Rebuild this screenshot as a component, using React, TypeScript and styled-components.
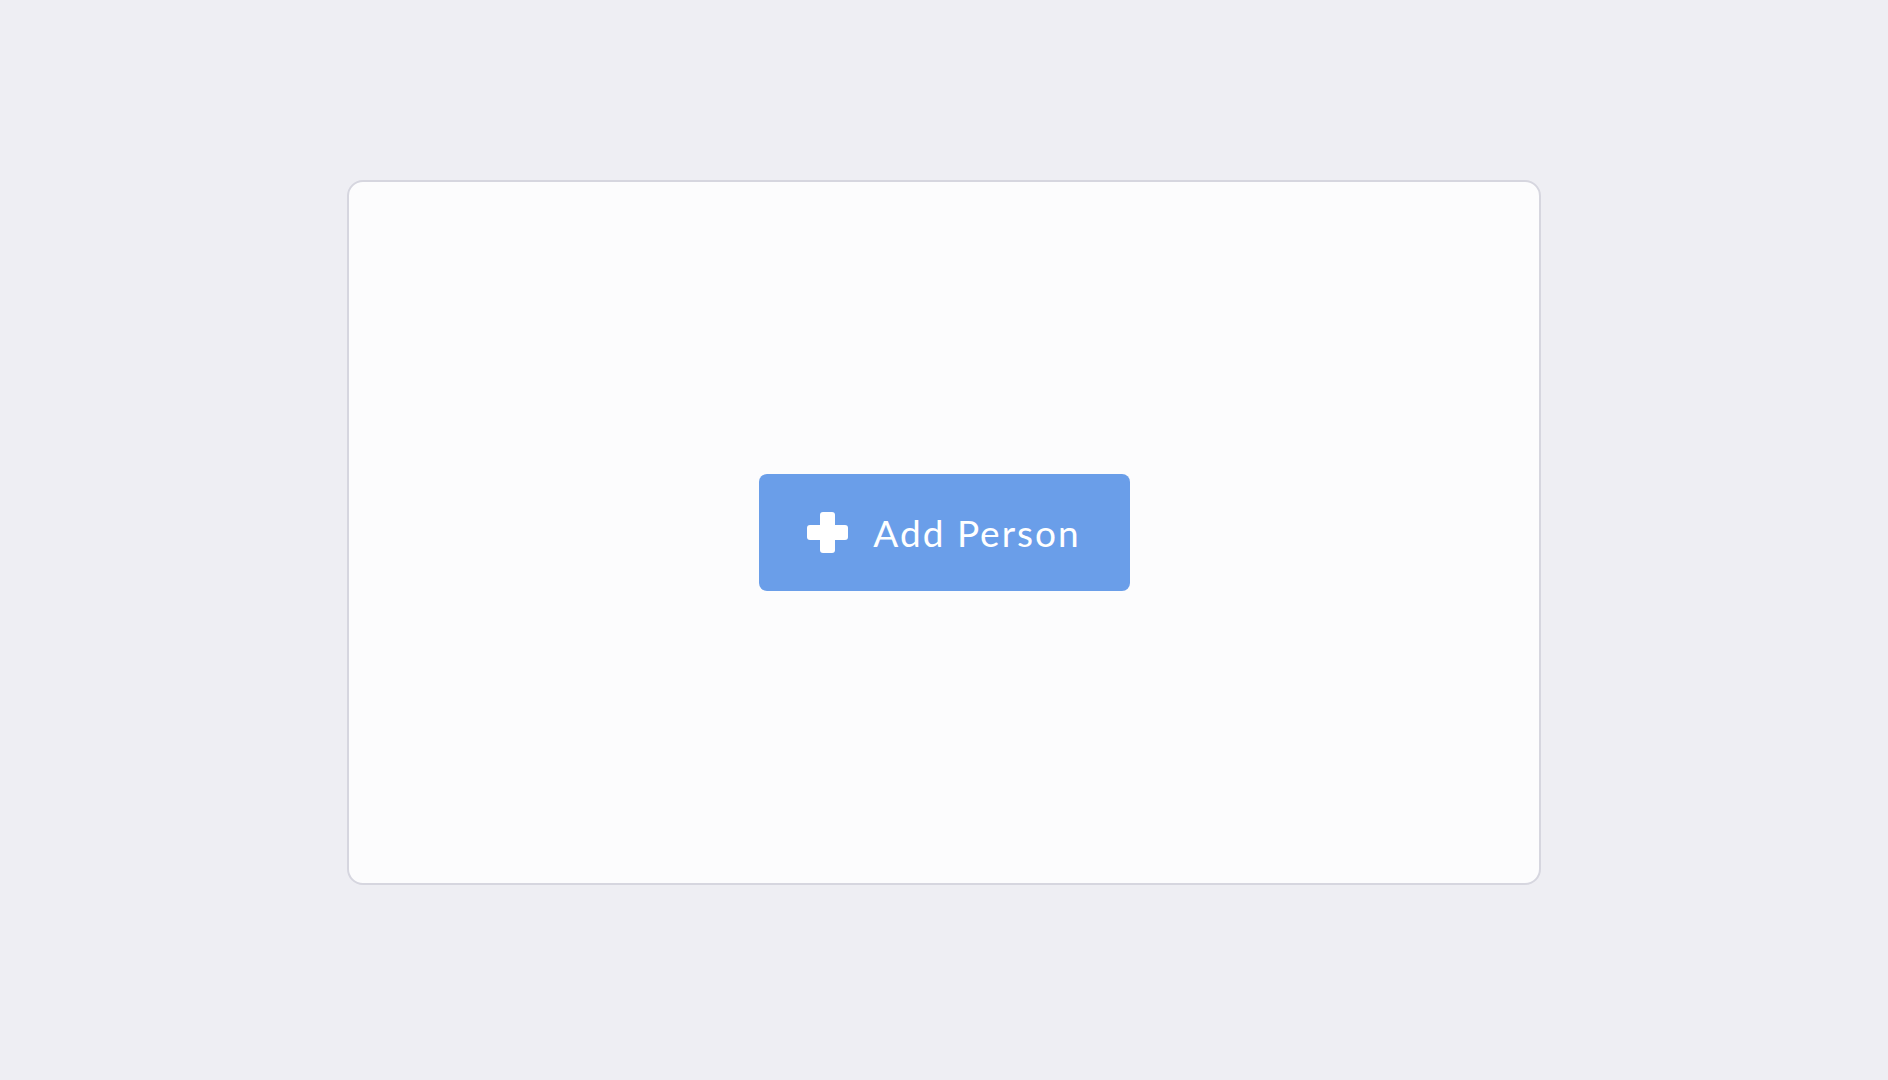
import React from 'react';
import styled, { createGlobalStyle } from 'styled-components';

const GlobalStyle = createGlobalStyle`
  html, body {
    margin: 0;
    padding: 0;
    background: #eeeef3;
    font-family: "Lato", "Open Sans", sans-serif;
  }
`;

const Page = styled.div`
  min-height: 100vh;
  box-sizing: border-box;
  display: flex;
  justify-content: center;
  align-items: flex-start;
  padding-top: 180px;
`;

const Card = styled.div`
  width: 1194px;
  height: 705px;
  box-sizing: border-box;
  background: #fcfcfd;
  border: 2px solid #d6d6df;
  border-radius: 16px;
  display: flex;
  align-items: center;
  justify-content: center;
`;

const AddButton = styled.button`
  width: 371px;
  height: 117px;
  border: none;
  border-radius: 8px;
  background: #6a9ee9;
  color: #ffffff;
  display: flex;
  align-items: center;
  justify-content: center;
  gap: 25px;
  font-family: "Lato", "Open Sans", sans-serif;
  font-size: 37px;
  font-weight: 400;
  letter-spacing: 2px;
  cursor: pointer;
  padding: 0;
`;

const PlusIcon = () => (
  <svg width="41" height="41" viewBox="0 0 41 41">
    <rect x="13" y="0" width="15" height="41" rx="3" fill="#fff" />
    <rect x="0" y="13" width="41" height="15" rx="3" fill="#fff" />
  </svg>
);

const App: React.FC = () => {
  return (
    <>
      <GlobalStyle />
      <Page>
        <Card>
          <AddButton>
            <PlusIcon />
            <span>Add Person</span>
          </AddButton>
        </Card>
      </Page>
    </>
  );
};

export default App;
